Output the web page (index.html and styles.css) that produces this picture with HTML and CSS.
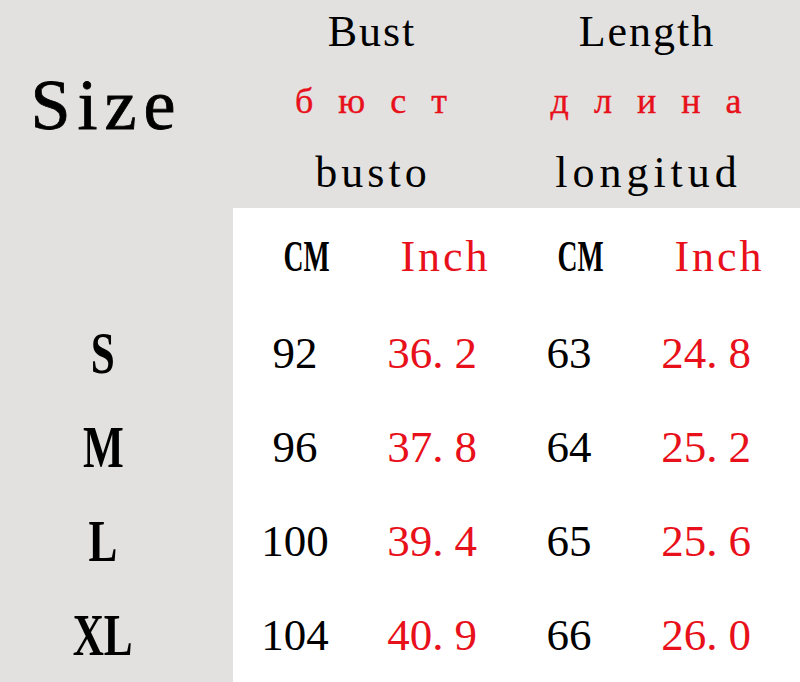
FILE: index.html
```html
<!DOCTYPE html>
<html lang="en">
<head>
<meta charset="utf-8">
<title>Size chart</title>
<link rel="stylesheet" href="styles.css">
</head>
<body>
<div class="page">
  <header class="top">
    <div class="size-title">Size</div>
    <div class="measure">
      <div class="en bust">Bust</div>
      <div class="ru">б ю с т</div>
      <div class="es busto">busto</div>
    </div>
    <div class="measure">
      <div class="en length">Length</div>
      <div class="ru">д л и н а</div>
      <div class="es longitud">longitud</div>
    </div>
  </header>

  <section class="chart">
    <div class="side"></div>
    <div class="unit"><span class="cm">CM</span></div>
    <div class="unit inch">Inch</div>
    <div class="unit"><span class="cm">CM</span></div>
    <div class="unit inch">Inch</div>

    <div class="side size"><span class="letter">S</span></div>
    <div class="num">92</div>
    <div class="num red">36<span class="dot">.</span>2</div>
    <div class="num">63</div>
    <div class="num red">24<span class="dot">.</span>8</div>

    <div class="side size"><span class="letter">M</span></div>
    <div class="num">96</div>
    <div class="num red">37<span class="dot">.</span>8</div>
    <div class="num">64</div>
    <div class="num red">25<span class="dot">.</span>2</div>

    <div class="side size"><span class="letter">L</span></div>
    <div class="num">100</div>
    <div class="num red">39<span class="dot">.</span>4</div>
    <div class="num">65</div>
    <div class="num red">25<span class="dot">.</span>6</div>

    <div class="side size"><span class="letter">XL</span></div>
    <div class="num">104</div>
    <div class="num red">40<span class="dot">.</span>9</div>
    <div class="num">66</div>
    <div class="num red">26<span class="dot">.</span>0</div>
  </section>
</div>
</body>
</html>
```

FILE: styles.css
```css
* { box-sizing: border-box; }

html, body {
  margin: 0;
  padding: 0;
  background: #e2e1df;
}

body {
  font-family: "Liberation Serif", "Times New Roman", serif;
  color: #000;
}

.page {
  width: 800px;
  height: 682px;
  overflow: hidden;
}

/* ---------- top header ---------- */
.top {
  display: grid;
  grid-template-columns: 233px 276px 274px;
  height: 208px;
  background: #e2e1df;
}

.size-title {
  align-self: center;
  text-align: center;
  padding-right: 27px;
  padding-top: 3px;
  font-size: 72px;
  letter-spacing: 7px;
  text-indent: 7px;
  -webkit-text-stroke: 0.8px #000;
}

.measure {
  display: flex;
  flex-direction: column;
  text-align: center;
}

.en {
  height: 64px;
  line-height: 64px;
  font-size: 44px;
}

.ru {
  height: 74px;
  line-height: 74px;
  font-size: 36px;
  color: #e8101a;
  letter-spacing: 8px;
  text-indent: 8px;
  -webkit-text-stroke: 0.4px #e8101a;
}

.es {
  height: 70px;
  line-height: 70px;
  font-size: 44px;
}

.bust { letter-spacing: 2px; text-indent: 2px; }
.length { letter-spacing: 2px; text-indent: 2px; }
.busto { letter-spacing: 4px; text-indent: 4px; }
.longitud { letter-spacing: 5px; text-indent: 5px; }

/* ---------- chart ---------- */
.chart {
  display: grid;
  grid-template-columns: 233px 124px 150px 124px 150px;
  grid-template-rows: 98px repeat(4, 94px);
  height: 474px;
  background: #fff;
}

.side {
  background: #e2e1df;
}

.size {
  text-align: center;
  padding-right: 27px;
  line-height: 94px;
  font-size: 60px;
  font-weight: bold;
}

.letter {
  display: inline-block;
  transform: scaleX(0.72);
}

.unit {
  text-align: center;
  padding-left: 24px;
  line-height: 98px;
  font-size: 44px;
}

.cm {
  display: inline-block;
  font-weight: bold;
  transform: scaleX(0.63);
}

.inch {
  color: #e8101a;
  letter-spacing: 3px;
  text-indent: 3px;
}

.num {
  text-align: center;
  line-height: 94px;
  font-size: 45px;
}

.red {
  color: #e8101a;
}

.dot {
  margin-right: 11px;
}
```
